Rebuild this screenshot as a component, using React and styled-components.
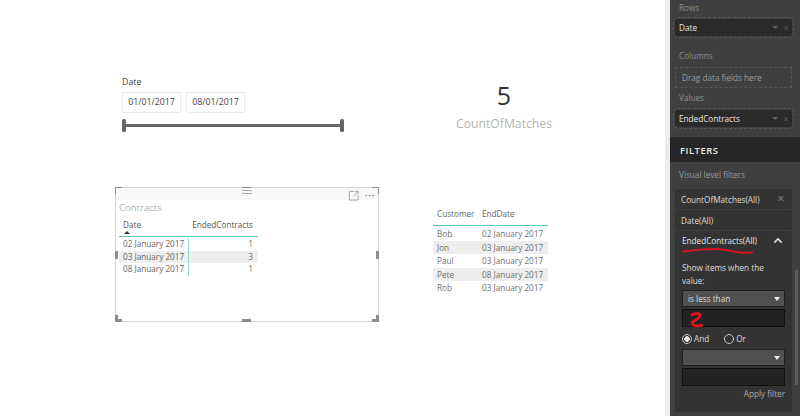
import React from 'react';
import styled, { createGlobalStyle } from 'styled-components';

const GlobalStyle = createGlobalStyle`
    * {
        box-sizing: border-box;
    }
    html, body {
        margin: 0;
        padding: 0;
        background: #fff;
    }
    body {
        font-family: 'Open Sans', 'Noto Sans', sans-serif;
        color: #444;
    }
`;

const contractRows = [
    { date: '02 January 2017', count: 1 },
    { date: '03 January 2017', count: 3, striped: true },
    { date: '08 January 2017', count: 1 },
];

const customerRows = [
    { name: 'Bob', date: '02 January 2017' },
    { name: 'Jon', date: '03 January 2017', striped: true },
    { name: 'Paul', date: '03 January 2017' },
    { name: 'Pete', date: '08 January 2017', striped: true },
    { name: 'Rob', date: '03 January 2017' },
];

const App = () => (
    <Page>
        <GlobalStyle />
        <Canvas>
            <TopRow>
                <Slicer>
                    <SlicerLabel>Date</SlicerLabel>
                    <DateBoxes>
                        <DateBox>01/01/2017</DateBox>
                        <DateBox>08/01/2017</DateBox>
                    </DateBoxes>
                    <Slider>
                        <Handle />
                        <Handle />
                    </Slider>
                </Slicer>
                <Card>
                    <CardValue>5</CardValue>
                    <CardLabel>CountOfMatches</CardLabel>
                </Card>
            </TopRow>
            <BottomRow>
                <Visual>
                    <CornerMark $at="tl" />
                    <CornerMark $at="tr" />
                    <CornerMark $at="bl" />
                    <CornerMark $at="br" />
                    <EdgeMark $at="top" />
                    <EdgeMark $at="bottom" />
                    <EdgeMark $at="left" />
                    <EdgeMark $at="right" />
                    <VisualHeader>
                        <Grip />
                        <FocusIcon viewBox="0 0 12 12">
                            <path d="M7 1.5H1.5V11H11V5.5M6 6.5L11 1.5M8 1.5h3v3" fill="none" stroke="#888" strokeWidth="0.8" />
                        </FocusIcon>
                        <More>···</More>
                    </VisualHeader>
                    <VisualTitle>Contracts</VisualTitle>
                    <ContractTable>
                        <ContractHead>
                            <DateHead>
                                Date
                                <SortArrow />
                            </DateHead>
                            <CountHead>EndedContracts</CountHead>
                        </ContractHead>
                        <ContractBody>
                            {contractRows.map((row) => (
                                <ContractRow key={row.date} $striped={row.striped}>
                                    <DateCell>{row.date}</DateCell>
                                    <CountCell>{row.count}</CountCell>
                                </ContractRow>
                            ))}
                        </ContractBody>
                    </ContractTable>
                </Visual>
                <CustomerTable>
                    <CustomerHead>
                        <span>Customer</span>
                        <span>EndDate</span>
                    </CustomerHead>
                    <CustomerBody>
                        {customerRows.map((row) => (
                            <CustomerRow key={row.name} $striped={row.striped}>
                                <span>{row.name}</span>
                                <span>{row.date}</span>
                            </CustomerRow>
                        ))}
                    </CustomerBody>
                </CustomerTable>
            </BottomRow>
        </Canvas>
        <Pane>
            <Fields>
                <FieldLabel $below={5}>Rows</FieldLabel>
                <Pill>
                    Date
                    <PillIcons>
                        <Caret />
                        <Cross>×</Cross>
                    </PillIcons>
                </Pill>
                <FieldLabel $above={14} $below={5}>Columns</FieldLabel>
                <DropZone>Drag data fields here</DropZone>
                <FieldLabel $above={4} $below={6}>Values</FieldLabel>
                <Pill>
                    EndedContracts
                    <PillIcons>
                        <Caret />
                        <Cross>×</Cross>
                    </PillIcons>
                </Pill>
            </Fields>
            <FiltersBand>FILTERS</FiltersBand>
            <Filters>
                <FilterScope>Visual level filters</FilterScope>
                <FilterCard>
                    CountOfMatches(All)
                    <Cross $big>×</Cross>
                </FilterCard>
                <FilterCard>Date(All)</FilterCard>
                <OpenFilter>
                    <OpenTitle>
                        EndedContracts(All)
                        <Chevron viewBox="0 0 12 8">
                            <path d="M1.5 6.5L6 2l4.500 4.500" fill="none" stroke="#ddd" strokeWidth="2" />
                        </Chevron>
                    </OpenTitle>
                    <ShowText>Show items when the value:</ShowText>
                    <Select>
                        is less than
                        <SelectCaret />
                    </Select>
                    <TextInput />
                    <Radios>
                        <Radio $on />
                        <RadioText>And</RadioText>
                        <Radio />
                        <RadioText>Or</RadioText>
                    </Radios>
                    <Select>
                        <SelectCaret />
                    </Select>
                    <TextInput />
                    <ApplyFilter>Apply filter</ApplyFilter>
                </OpenFilter>
            </Filters>
            <Scrollbar />
            <Scribble viewBox="0 0 130 416">
                <path d="M13 251.500c10-1.500 22-2.500 32-2.500c8 0 13 1 19 2.500c6 1.200 12 1.500 18 1" fill="none" stroke="#e0141c" strokeWidth="2" strokeLinecap="round" />
                <path d="M22 315c3-2 7-2 8 0c1 2-3 4-6 6c-2 1-2 3-1 4c3 1.500 6 .5 9 .5" fill="none" stroke="#e0141c" strokeWidth="2.800" strokeLinecap="round" strokeLinejoin="round" />
            </Scribble>
        </Pane>
    </Page>
);

export default App;

const Page = styled.div`
    display: flex;
    width: 800px;
    height: 416px;
    overflow: hidden;
    background: #fff;
`;

const Canvas = styled.main`
    flex: none;
    width: 665px;
    padding: 76px 0 0 115px;
`;

const TopRow = styled.div`
    display: flex;
    height: 111px;
`;

const Slicer = styled.div`
    width: 230px;
    padding-left: 7px;
`;

const SlicerLabel = styled.div`
    font-size: 8.800px;
    line-height: 12px;
    color: #444;
`;

const DateBoxes = styled.div`
    display: flex;
    gap: 5px;
    margin-top: 4px;
`;

const DateBox = styled.div`
    width: 59px;
    height: 21px;
    border: 1px solid #ececec;
    font-size: 8.800px;
    line-height: 19px;
    text-align: center;
    color: #444;
`;

const Slider = styled.div`
    display: flex;
    justify-content: space-between;
    align-items: center;
    width: 222px;
    height: 14px;
    margin-top: 5px;
    background: linear-gradient(#666, #666) center / 100% 3px no-repeat;
`;

const Handle = styled.span`
    width: 4px;
    height: 13px;
    border-radius: 1.500px;
    background: #666;
`;

const Card = styled.div`
    width: 190px;
    margin: 5px 0 0 64px;
    text-align: center;
`;

const CardValue = styled.div`
    font-size: 25px;
    line-height: 28px;
    color: #333;
`;

const CardLabel = styled.div`
    margin-top: 7px;
    font-size: 12.200px;
    line-height: 16px;
    color: #b3b3b3;
`;

const BottomRow = styled.div`
    display: flex;
`;

const Visual = styled.section`
    position: relative;
    width: 264px;
    height: 135px;
    border: 1px solid #d4d4d4;
`;

const cornerSides = {
    tl: 'top: -1px; left: -1px; border-width: 3px 0 0 3px;',
    tr: 'top: -1px; right: -1px; border-width: 3px 3px 0 0;',
    bl: 'bottom: -1px; left: -1px; border-width: 0 0 3px 3px;',
    br: 'bottom: -1px; right: -1px; border-width: 0 3px 3px 0;',
};

const CornerMark = styled.span`
    position: absolute;
    width: 7px;
    height: 7px;
    border: 0 solid #8c8c8c;
    ${(p) => cornerSides[p.$at]}
`;

const edgeSides = {
    top: 'top: -1px; left: 126px; width: 9px; height: 3px;',
    bottom: 'bottom: -1px; left: 126px; width: 9px; height: 3px;',
    left: 'left: -1px; top: 63px; width: 3px; height: 8px;',
    right: 'right: -1px; top: 63px; width: 3px; height: 8px;',
};

const EdgeMark = styled.span`
    position: absolute;
    background: #8c8c8c;
    ${(p) => edgeSides[p.$at]}
`;

const VisualHeader = styled.div`
    position: relative;
    display: flex;
    justify-content: flex-end;
    align-items: center;
    gap: 6px;
    height: 12px;
    padding: 2px 3px 0 0;
    background: #f8f8f8;
`;

const Grip = styled.span`
    position: absolute;
    left: 126px;
    top: 2px;
    width: 10px;
    height: 4px;
    border-top: 1px solid #aaa;
    border-bottom: 1px solid #aaa;
`;

const FocusIcon = styled.svg`
    width: 11px;
    height: 11px;
`;

const More = styled.span`
    font-size: 11px;
    line-height: 10px;
    color: #777;
    letter-spacing: 0.500px;
`;

const VisualTitle = styled.div`
    margin: 1px 0 0 3px;
    font-size: 9.500px;
    line-height: 13px;
    color: #b0b0b0;
`;

const ContractTable = styled.div`
    width: 139px;
    margin: 5px 0 0 3px;
`;

const ContractHead = styled.div`
    display: grid;
    grid-template-columns: 70px 1fr;
    height: 18px;
    border-bottom: 1px solid #59c6c0;
    font-size: 8.200px;
    line-height: 12px;
    color: #555;
`;

const DateHead = styled.span`
    position: relative;
    padding-left: 4px;
`;

const SortArrow = styled.i`
    position: absolute;
    left: 5px;
    top: 12px;
    border: 3px solid transparent;
    border-top: 0;
    border-bottom: 3px solid #333;
`;

const CountHead = styled.span`
    text-align: right;
    padding-right: 5px;
`;

const ContractBody = styled.div`
    padding-top: 1px;
`;

const ContractRow = styled.div`
    display: grid;
    grid-template-columns: 70px 1fr;
    height: 12.700px;
    font-size: 8.200px;
    line-height: 12.700px;
    color: #666;
    background: ${(p) => (p.$striped ? '#eeeeee' : 'transparent')};
`;

const DateCell = styled.span`
    padding-left: 4px;
    border-right: 1.500px solid #8fd8d2;
    white-space: nowrap;
`;

const CountCell = styled.span`
    text-align: right;
    padding-right: 5px;
`;

const CustomerTable = styled.div`
    width: 115px;
    margin: 20px 0 0 54px;
`;

const customerColumns = 'display: grid; grid-template-columns: 45px 1fr; padding-left: 4px; white-space: nowrap;';

const CustomerHead = styled.div`
    ${customerColumns}
    height: 19px;
    border-bottom: 1px solid #59c6c0;
    font-size: 8.200px;
    line-height: 14px;
    color: #666;
`;

const CustomerBody = styled.div`
    padding-top: 1px;
`;

const CustomerRow = styled.div`
    ${customerColumns}
    height: 13.500px;
    font-size: 8.200px;
    line-height: 13.500px;
    color: #707070;
    background: ${(p) => (p.$striped ? '#eeeeee' : 'transparent')};
`;

const Pane = styled.aside`
    position: relative;
    flex: none;
    width: 135px;
    height: 416px;
    border-left: 5px solid #ececec;
    background: #3f3f3f;
    color: #ddd;
    font-size: 8.200px;
`;

const Fields = styled.div`
    height: 137px;
    padding: 2px 8px 0 5px;
`;

const FieldLabel = styled.div`
    padding-left: 4px;
    line-height: 12px;
    color: #8e8e8e;
    margin-top: ${(p) => p.$above || 0}px;
    margin-bottom: ${(p) => p.$below || 0}px;
`;

const Pill = styled.div`
    display: flex;
    justify-content: space-between;
    align-items: center;
    height: 17px;
    padding: 0 3px 0 4px;
    border-radius: 3px;
    background: #2a2a2a;
    outline: 1px dashed #555;
    outline-offset: 1px;
    color: #e6e6e6;
`;

const PillIcons = styled.span`
    display: flex;
    align-items: center;
    gap: 5px;
`;

const Caret = styled.i`
    border: 3px solid transparent;
    border-bottom: 0;
    border-top: 3px solid #666;
`;

const Cross = styled.span`
    color: ${(p) => (p.$big ? '#888' : '#5e5e5e')};
    font-size: ${(p) => (p.$big ? '12px' : '10px')};
    line-height: 10px;
`;

const DropZone = styled.div`
    height: 21px;
    padding-left: 6px;
    border: 1px dashed #555;
    line-height: 19px;
    color: #9a9a9a;
`;

const FiltersBand = styled.div`
    height: 25px;
    padding: 7px 0 0 10px;
    background: #262626;
    font-size: 9.500px;
    font-weight: 600;
    line-height: 14px;
    color: #e8e8e8;
    letter-spacing: 0.500px;
`;

const Filters = styled.div`
    padding: 7px 8px 0 5px;
`;

const FilterScope = styled.div`
    padding-left: 4px;
    margin-bottom: 8px;
    line-height: 12px;
    color: #999;
`;

const FilterCard = styled.div`
    display: flex;
    justify-content: space-between;
    align-items: center;
    height: 20px;
    margin-bottom: 1px;
    padding: 0 8px 0 6px;
    border-radius: 2px;
    background: #333;
    color: #ddd;
`;

const OpenFilter = styled.div`
    height: 181px;
    padding: 0 7px;
    border-radius: 2px;
    background: #333;
`;

const OpenTitle = styled.div`
    display: flex;
    justify-content: space-between;
    align-items: center;
    height: 18px;
    padding-right: 2px;
    color: #e6e6e6;
`;

const Chevron = styled.svg`
    width: 10px;
    height: 7px;
`;

const ShowText = styled.div`
    margin-top: 12px;
    line-height: 13px;
    color: #ddd;
`;

const Select = styled.div`
    display: flex;
    justify-content: space-between;
    align-items: center;
    height: 17px;
    margin-top: 3px;
    padding: 0 4px 0 5px;
    border: 1px solid #222;
    background: #505050;
    color: #ddd;
`;

const SelectCaret = styled.i`
    margin-left: auto;
    border: 3px solid transparent;
    border-bottom: 0;
    border-top: 4px solid #eee;
`;

const TextInput = styled.div`
    height: 18px;
    margin-top: 2px;
    border: 1px solid #111;
    background: #232323;
`;

const Radios = styled.div`
    display: flex;
    align-items: center;
    height: 15px;
    margin-top: 4px;
`;

const Radio = styled.span`
    width: 10px;
    height: 10px;
    border: 1px solid #ccc;
    border-radius: 50%;
    background: ${(p) => (p.$on ? 'radial-gradient(circle, #e8e8e8 0 2.500px, transparent 3px)' : 'transparent')};
`;

const RadioText = styled.span`
    margin: 0 15px 0 2px;
    color: #ddd;
`;

const ApplyFilter = styled.div`
    margin-top: 1px;
    text-align: right;
    line-height: 13px;
    color: #aaa;
`;

const Scrollbar = styled.span`
    position: absolute;
    right: 2px;
    top: 270px;
    width: 3px;
    height: 115px;
    background: #5a5a5a;
`;

const Scribble = styled.svg`
    position: absolute;
    left: 0;
    top: 0;
    width: 130px;
    height: 416px;
    pointer-events: none;
`;
